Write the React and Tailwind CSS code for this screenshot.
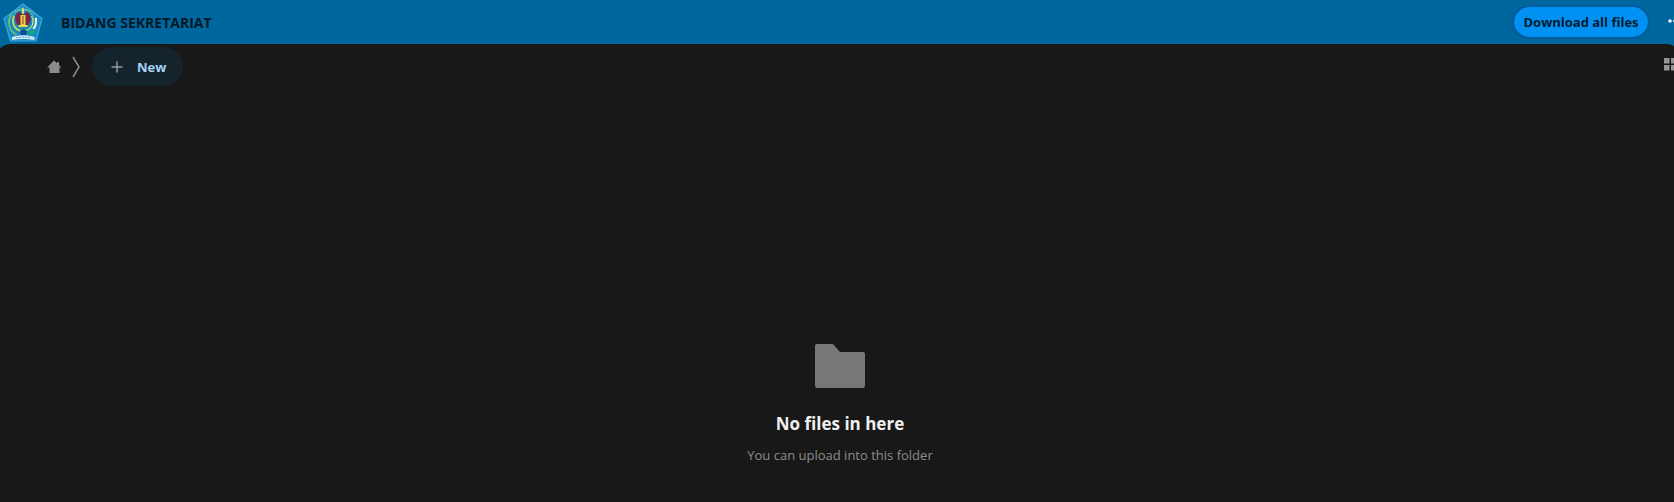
const rays = [-60, -50, -40, -30, -20];

function Crest() {
  return (
    <svg viewBox="0 0 40 40" className="h-10 w-10" role="img" aria-label="Regional crest">
      <path d="M20 1 39 15.500 33 38H7.500L1 15.500Z" fill="#1489c6" stroke="#3aa9dc" strokeWidth="1.200" strokeLinejoin="round" />
      <path d="M8 12a15 15 0 0 1 24 0" fill="none" stroke="#7fc8a0" strokeWidth="1" strokeDasharray="3 1" />
      <circle cx="20" cy="17" r="10.500" fill="#1a86b4" stroke="#6fc6a8" strokeWidth="1" />
      <path d="M12.500 18c-1-5 1-9 4-9l3.500 3 3.500-3c3 0 5 4 4 9l-2 4h-11Z" fill="#77264e" />
      <path d="M20 4c1.500 2 1.500 5 .5 7h-1c-1-2-1-5 .5-7Z" fill="#e2de63" />
      <path d="M17.500 12h5v10h-5Z" fill="#e6d33f" />
      <path d="M19.300 13h1.400v8h-1.400Z" fill="#b8661f" />
      <path d="M15.500 22h9v2h-9Z" fill="#e8dc44" />
      <path d="M8 12c-4 7-2 16 6 20" fill="none" stroke="#7fd04f" strokeWidth="1.800" strokeDasharray="2 .6" />
      <path d="M11 13c-2 7 0 13 7 15.500" fill="none" stroke="#c8dd4c" strokeWidth="1.600" />
      {rays.map((r) => (
        <path key={r} d="M33 16v2.500" transform={`rotate(${r + 55} 20 18)`} stroke="#f1f5d0" strokeWidth="2.200" />
      ))}
      <path d="M28.500 13c3 6 1 13-5 14.500" fill="none" stroke="#d9e36a" strokeWidth="1" />
      <path d="M17 28c2-2 5-2 7 0l-1 4h-5.500Z" fill="#0d4f90" />
      <path d="M25.500 29c2-2 4.500-1 7-2.500-1 3.500-2.500 5-6 5.500Z" fill="#16a96a" />
      <path d="M9 34c7-2.500 15-2.500 22.500 0v3c-7-1.500-15.500-1.500-22.500 0Z" fill="#cfe6f5" />
      <path d="M13 34.800c5-1 10-1 14.500 0" fill="none" stroke="#5a8fc6" strokeWidth=".8" strokeDasharray="2 1" />
    </svg>
  );
}

export default function App() {
  return (
    <div className="flex min-h-screen flex-col overflow-hidden bg-[#00679e] font-['Open_Sans','Noto_Sans',sans-serif]">
      <header className="flex h-11 shrink-0 items-center justify-between pl-[3px]">
        <div className="flex items-center gap-[18px] pt-px">
          <Crest />
          <h1 className="text-sm font-bold text-[#021826]">BIDANG SEKRETARIAT</h1>
        </div>
        <div className="-mr-3 flex shrink-0 items-center gap-4">
          <button
            type="button"
            className="h-[34px] w-[138px] whitespace-nowrap rounded-full border-2 border-[#005c9c] bg-[#0091f2] bg-clip-padding text-[13px] font-bold leading-5 text-[#001c30]"
          >
            Download all files
          </button>
          <button type="button" aria-label="More actions" className="h-5 w-5">
            <svg viewBox="0 0 20 20" className="h-5 w-5" fill="#f3faff">
              <circle cx="4" cy="9" r="1.800" />
              <circle cx="9" cy="9" r="1.800" />
              <circle cx="14" cy="9" r="1.800" />
            </svg>
          </button>
        </div>
      </header>

      <main className="-ml-[5px] -mr-2 flex grow flex-col rounded-t-2xl bg-[#181818] pb-[37px]">
        <div className="flex items-start justify-between pl-[51px] pt-[3px]">
          <div className="flex items-center">
            <nav aria-label="Breadcrumb" className="flex items-center gap-[9px]">
              <a href="#home" aria-label="Home">
                <svg viewBox="0 0 16 16" className="h-4 w-4" fill="#8c8c8c">
                  <path d="M8 1.500 11 4.200V3h2v3L15.500 8.500H13.500V14H3.500V8.500H1Z" />
                </svg>
              </a>
              <svg viewBox="0 0 10 24" className="h-6 w-[10px]" fill="none" stroke="#8c8c8c" strokeWidth="1.500" aria-hidden="true">
                <path d="M2 2 8 12 2 22" />
              </svg>
            </nav>
            <button
              type="button"
              className="ml-[11px] flex h-[39px] items-center gap-3 rounded-full bg-[#15232d] px-[17px] text-[13px] font-bold leading-5 text-[#a5d5f8]"
            >
              <svg viewBox="0 0 16 16" className="h-4 w-4" fill="none" stroke="#999999" strokeWidth="1.500" aria-hidden="true">
                <path d="M8 2.500v11M2.500 8h11" />
              </svg>
              New
            </button>
          </div>
          <button type="button" aria-label="Switch to grid view" className="mr-[3px] mt-[10px] h-4 w-4">
            <svg viewBox="0 0 16 16" className="h-4 w-4" fill="#979797">
              <path d="M1 1h5.500v5.500H1ZM8 1h5.500v5.500H8ZM1 8h5.500v5.500H1ZM8 8h5.500v5.500H8Z" />
            </svg>
          </button>
        </div>

        <section className="mt-auto flex flex-col items-center pl-[3px]">
          <svg viewBox="0 0 50 44" className="h-11 w-[50px]" fill="#777777" aria-hidden="true">
            <path d="M2 0h16l7 8h23a2 2 0 0 1 2 2v32a2 2 0 0 1-2 2H2a2 2 0 0 1-2-2V2a2 2 0 0 1 2-2Z" />
          </svg>
          <h2 className="mt-6 text-[17px] font-bold leading-6 text-[#f0f0f0]">No files in here</h2>
          <p className="mt-[9px] text-[13px] leading-5 text-[#8c8c8c]">You can upload into this folder</p>
        </section>
      </main>
    </div>
  );
}
